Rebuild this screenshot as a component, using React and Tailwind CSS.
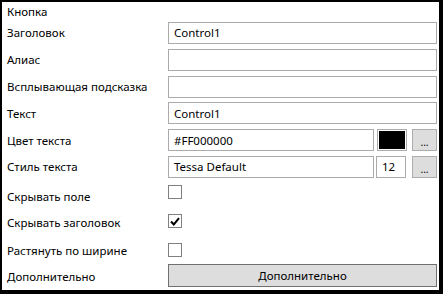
import React from 'react'

const font = { fontFamily: '"Noto Sans", "Open Sans", sans-serif' }

function Label({ children }) {
  return <div className="flex items-center pl-[5px] text-[11.5px] text-black">{children}</div>
}

function Field({ value, className = '' }) {
  return (
    <div className={`flex h-[22px] items-center border border-[#ababab] bg-white px-[5px] text-[11.5px] text-black ${className}`}>
      {value}
    </div>
  )
}

function Dots() {
  return (
    <div className="flex h-[22px] w-[25px] shrink-0 items-end justify-center border border-[#adadad] bg-[#dddddd] pb-[3px] text-[10px] leading-none text-black">
      ...
    </div>
  )
}

function Check({ checked }) {
  return (
    <div className="flex h-[14px] w-[14px] items-center justify-center border border-[#808080] bg-white">
      {checked && (
        <svg width="10" height="9" viewBox="0 0 10 9">
          <path d="M1 4.5 L3.8 7.5 L9 1.2" fill="none" stroke="#000" strokeWidth="2" />
        </svg>
      )}
    </div>
  )
}

export default function App() {
  return (
    <div className="h-[294px] w-[443px] bg-black pb-[4px] pl-[2px] pr-[4px] pt-[2px]" style={font}>
      <div className="flex h-full flex-col bg-white pr-[2px]">
        <div className="flex h-[20px] items-center pl-[5px] text-[11.5px] text-black">Кнопка</div>
        <div className="grid grid-cols-[166px_1fr] gap-y-[4.8px]">
          <Label>Заголовок</Label>
          <Field value="Control1" />
          <Label>Алиас</Label>
          <Field value="" />
          <Label>Всплывающая подсказка</Label>
          <Field value="" />
          <Label>Текст</Label>
          <Field value="Control1" />
          <Label>Цвет текста</Label>
          <div className="flex gap-[3px]">
            <Field value="#FF000000" className="flex-1" />
            <div className="flex h-[22px] w-[30px] items-center justify-center border border-[#ababab] bg-white p-[1px]">
              <div className="h-full w-full bg-black" />
            </div>
            <div className="w-0 -ml-[1px]" />
            <Dots />
          </div>
          <Label>Стиль текста</Label>
          <div className="flex gap-[2px]">
            <Field value="Tessa Default" className="flex-1" />
            <Field value="12" className="w-[30px] shrink-0" />
            <div className="w-[2px]" />
            <Dots />
          </div>
        </div>
        <div className="grid grid-cols-[166px_1fr]">
          <div className="col-span-2 grid h-[29px] grid-cols-[166px_1fr] items-center">
            <Label><span className="pt-[8px]">Скрывать поле</span></Label>
            <Check />
          </div>
          <div className="col-span-2 grid h-[29px] grid-cols-[166px_1fr] items-center">
            <Label><span className="pt-[2px]">Скрывать заголовок</span></Label>
            <Check checked />
          </div>
          <div className="col-span-2 grid h-[28px] grid-cols-[166px_1fr] items-center">
            <Label><span className="pt-[2px]">Растянуть по ширине</span></Label>
            <Check />
          </div>
          <Label><span className="pt-[2px]">Дополнительно</span></Label>
          <div className="flex h-[23px] items-center justify-center border border-[#707070] bg-[#dddddd] text-[11.5px] text-black">
            Дополнительно
          </div>
        </div>
      </div>
    </div>
  )
}
